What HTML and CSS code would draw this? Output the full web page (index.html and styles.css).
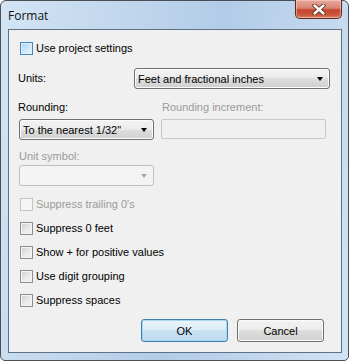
FILE: index.html
```html
<!DOCTYPE html>
<html>
<head>
<meta charset="utf-8">
<link rel="stylesheet" href="styles.css">
</head>
<body>
<div class="window">
  <div class="titlebar">
    <span class="title">Format</span>
    <div class="close">
      <svg width="14" height="11" viewBox="0 0 14 11">
        <path d="M2.5 1.5 L11.5 9.5 M11.5 1.5 L2.5 9.5" stroke="#5a2a22" stroke-width="4.2" stroke-linecap="round" fill="none"/>
        <path d="M2.5 1.5 L11.5 9.5 M11.5 1.5 L2.5 9.5" stroke="#ffffff" stroke-width="2.4" stroke-linecap="round" fill="none"/>
      </svg>
    </div>
  </div>
  <div class="panel">
    <div class="check hot first"><span class="box"></span><span>Use project settings</span></div>

    <div class="units-row">
      <span class="label">Units:</span>
      <div class="combo units-combo"><span>Feet and fractional inches</span><span class="arrow"></span></div>
    </div>

    <div class="rounding-grid">
      <span class="label">Rounding:</span>
      <span class="label disabled">Rounding increment:</span>
      <div class="combo"><span>To the nearest 1/32"</span><span class="arrow"></span></div>
      <div class="textbox"></div>
    </div>

    <span class="label disabled unit-label">Unit symbol:</span>
    <div class="combo combo-disabled unit-combo"><span></span><span class="arrow"></span></div>

    <div class="checks">
      <div class="check disabled-check"><span class="box"></span><span>Suppress trailing 0's</span></div>
      <div class="check"><span class="box"></span><span>Suppress 0 feet</span></div>
      <div class="check"><span class="box"></span><span>Show + for positive values</span></div>
      <div class="check"><span class="box"></span><span>Use digit grouping</span></div>
      <div class="check"><span class="box"></span><span>Suppress spaces</span></div>
    </div>

    <div class="buttons">
      <div class="btn default">OK</div>
      <div class="btn">Cancel</div>
    </div>
  </div>
</div>
</body>
</html>
```

FILE: styles.css
```css
html, body {
  margin: 0;
  padding: 0;
  background: #ffffff;
}

.window {
  width: 349px;
  height: 361px;
  box-sizing: border-box;
  border: 1px solid #4a4f55;
  border-radius: 6px 6px 5px 5px;
  background: linear-gradient(100deg, #d3e4f5 0%, #c4d9ee 25%, #b2cce8 55%, #bfd5ec 75%, #d2e3f4 100%);
  padding: 0 6px 7px 7px;
  display: flex;
  flex-direction: column;
  font-family: "Liberation Sans", Arial, sans-serif;
  font-size: 11px;
  color: #000;
}

.titlebar {
  height: 28px;
  display: flex;
  justify-content: space-between;
  align-items: flex-start;
}

.title {
  align-self: center;
  font-family: "Open Sans", "Noto Sans", sans-serif;
  font-size: 12px;
  color: #111;
  margin-top: 1px;
}

.close {
  width: 47px;
  height: 19px;
  box-sizing: border-box;
  margin-top: -1px;
  border: 1px solid #5b2a23;
  border-top: none;
  border-radius: 0 0 5px 5px;
  background: linear-gradient(#e7a99b 0%, #d98573 45%, #c5452f 55%, #cc5a3f 85%, #e08b6a 100%);
  box-shadow: inset 0 0 0 1px rgba(255, 220, 210, 0.5);
  display: flex;
  align-items: center;
  justify-content: center;
}

.close svg {
  display: block;
  margin-top: 1px;
}

.panel {
  flex: 1;
  background: #f0f0f0;
  border: 1px solid #5f7185;
  padding: 12px 11px 0 9px;
  display: flex;
  flex-direction: column;
  align-items: flex-start;
}

.label {
  line-height: 13px;
  height: 13px;
  white-space: nowrap;
}

.disabled {
  color: #9a9a9a;
}

.check {
  display: flex;
  align-items: center;
  height: 13px;
  line-height: 13px;
  padding-left: 2px;
  white-space: nowrap;
}

.check .box {
  width: 13px;
  height: 13px;
  box-sizing: border-box;
  border: 1px solid #8e8f8f;
  background: linear-gradient(135deg, #cdd0d4 0%, #e6e7e8 50%, #f7f7f7 100%);
  box-shadow: inset 0 0 0 1px #f4f4f4;
  margin-right: 3px;
  flex: none;
}

.check.hot .box {
  border-color: #4a86bc;
  background: linear-gradient(135deg, #aed6f4 0%, #cbe5f8 50%, #eaf5fd 100%);
  box-shadow: inset 0 0 0 1px #def0fc;
}

.check.disabled-check {
  color: #9a9a9a;
}

.check.disabled-check .box {
  border-color: #c3c3c3;
  background: #f5f5f5;
  box-shadow: none;
}

.units-row {
  margin-top: 13px;
  align-self: stretch;
  display: flex;
  justify-content: space-between;
  align-items: center;
}

.combo {
  height: 21px;
  box-sizing: border-box;
  border: 1px solid #707070;
  border-radius: 3px;
  background: linear-gradient(#f3f3f3 0%, #ebebeb 50%, #dddddd 50%, #d0d0d0 100%);
  box-shadow: inset 0 0 0 1px #fbfbfb;
  display: flex;
  align-items: center;
  justify-content: space-between;
  padding: 0 6px 0 3px;
  white-space: nowrap;
}

.units-combo {
  width: 196px;
}

.arrow {
  width: 0;
  height: 0;
  border-left: 3.5px solid transparent;
  border-right: 3.5px solid transparent;
  border-top: 4px solid #000;
  margin-top: 1px;
}

.rounding-grid {
  margin-top: 12px;
  display: grid;
  grid-template-columns: 136px 165px;
  column-gap: 7px;
  row-gap: 5px;
  align-items: start;
}

.rounding-grid .combo {
  margin-left: 1px;
  width: 135px;
}

.rounding-grid .label.disabled {
  margin-left: 1px;
}

.textbox {
  height: 20px;
  box-sizing: border-box;
  border: 1px solid #c7c9cc;
  border-radius: 2px;
  background: #f0f0f0;
}

.unit-label {
  margin-top: 10px;
  margin-left: 1px;
}

.combo-disabled {
  margin-top: 2px;
  margin-left: 1px;
  width: 135px;
  border-color: #bcc0c3;
  background: #f4f4f4;
  box-shadow: none;
}

.combo-disabled .arrow {
  border-top-color: #a6a6a6;
}

.checks {
  margin-top: 12px;
  display: flex;
  flex-direction: column;
  gap: 11px;
}

.buttons {
  margin-top: 12px;
  align-self: stretch;
  display: flex;
  justify-content: flex-end;
  gap: 9px;
  padding-right: 6px;
}

.btn {
  width: 87px;
  height: 23px;
  box-sizing: border-box;
  border: 1px solid #707070;
  border-radius: 3px;
  background: linear-gradient(#f3f3f3 0%, #ebebeb 50%, #dddddd 50%, #d0d0d0 100%);
  box-shadow: inset 0 0 0 1px #fbfbfb;
  display: flex;
  align-items: center;
  justify-content: center;
}

.btn.default {
  border-color: #3c7fb1;
  background: linear-gradient(#eaf4fb 0%, #dcecf7 50%, #c9e2f2 50%, #bcdaee 100%);
  box-shadow: inset 0 0 0 1px #a9d8f3;
}
```
